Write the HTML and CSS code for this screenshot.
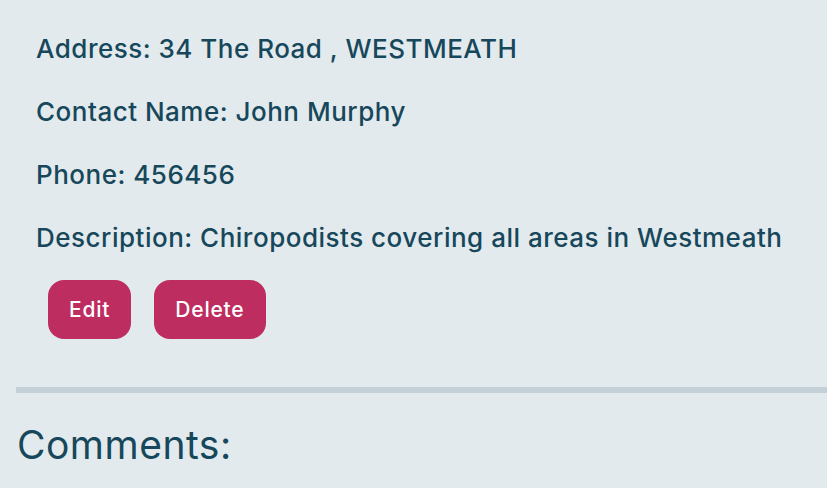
FILE: index.html
```html
<!DOCTYPE html>
<html>
<head>
<meta charset="utf-8">
<link rel="stylesheet" href="styles.css">
</head>
<body>
<div class="page">
  <div class="details">
    <p class="line">Address: 34 The Road , WESTMEATH</p>
    <p class="line">Contact Name: John Murphy</p>
    <p class="line">Phone: 456456</p>
    <p class="line">Description: Chiropodists covering all areas in Westmeath</p>
    <div class="actions">
      <button class="btn">Edit</button>
      <button class="btn">Delete</button>
    </div>
  </div>
  <hr class="divider">
  <h2 class="comments">Comments:</h2>
</div>
</body>
</html>
```
FILE: styles.css
```css
* { box-sizing: border-box; }
html, body {
  margin: 0;
  padding: 0;
  background: #e2eaee;
}
body {
  font-family: Inter, "Noto Sans", sans-serif;
  color: #17475a;
  width: 827px;
  height: 488px;
  overflow: hidden;
}
.page {
  padding-left: 16px;
}
.details {
  padding-left: 20px;
  padding-top: 34px;
}
.line {
  margin: 0 0 33px 0;
  font-size: 26px;
  font-weight: 500;
  letter-spacing: 0.5px;
  line-height: 30px;
}
.actions {
  display: flex;
  gap: 23px;
  padding-left: 12px;
  margin-top: -6px;
}
.btn {
  font-family: Inter, "Noto Sans", sans-serif;
  background: #be2d5f;
  color: #ffffff;
  border: none;
  border-radius: 16px;
  font-size: 21px;
  font-weight: 500;
  letter-spacing: 0.8px;
  height: 59px;
  padding: 0 21px;
}
.divider {
  border: none;
  height: 6px;
  background: #c3d0d7;
  margin: 48px 0 0 0;
}
.comments {
  margin: 29px 0 0 1px;
  font-size: 39px;
  font-weight: 400;
  letter-spacing: 0.5px;
  line-height: 46px;
}
```
